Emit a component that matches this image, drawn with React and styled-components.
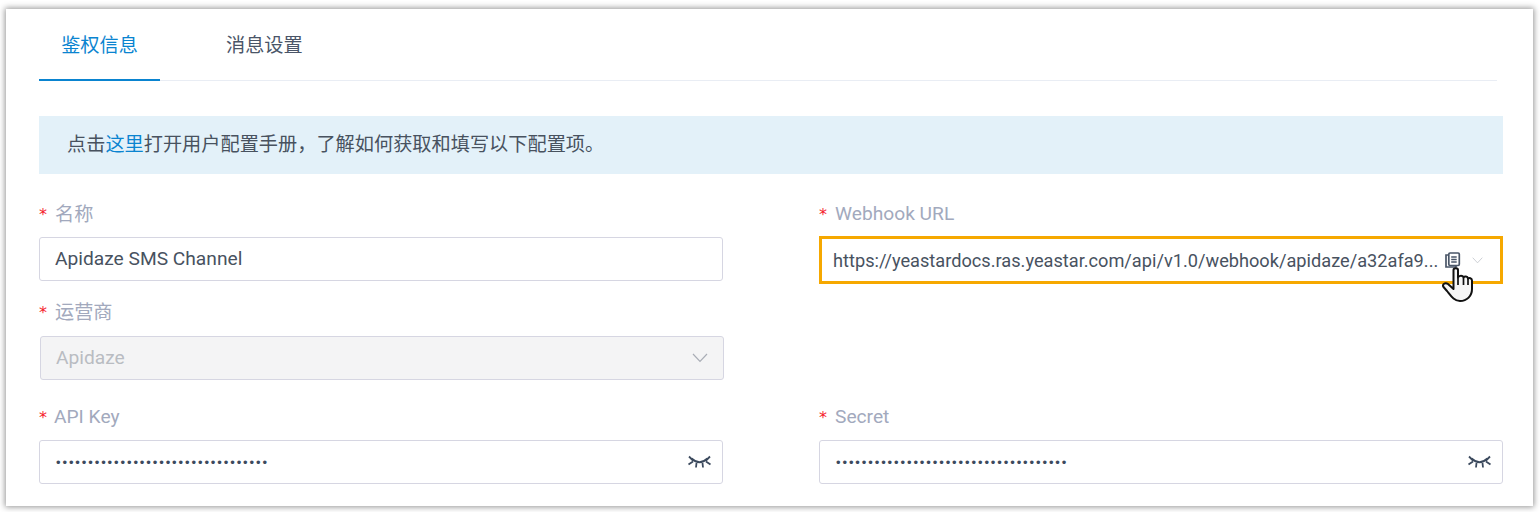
import React from "react";
import styled, { createGlobalStyle } from "styled-components";

const Global = createGlobalStyle`
  html, body { margin: 0; padding: 0; background: #fff; }
  body { font-family: Roboto, "Noto Sans CJK SC", sans-serif; width: 1540px; height: 512px; overflow: hidden; }
`;

const Panel = styled.main`
  box-sizing: border-box;
  margin: 9px 0 0 6px;
  width: 1527px;
  height: 497px;
  background: #fff;
  padding-left: 33px;
  box-shadow: 0 0 6px 1px rgba(0, 0, 0, 0.42);
  overflow: hidden;
`;

const Tabs = styled.nav`
  display: flex;
  width: 1458px;
  height: 72px;
  border-bottom: 1px solid #e9edf4;
  box-sizing: border-box;
`;

const Tab = styled.div`
  box-sizing: border-box;
  width: ${(p) => (p.$active ? "121px" : "auto")};
  margin-left: ${(p) => (p.$active ? "0" : "66px")};
  height: 72px;
  padding-top: 1px;
  line-height: 71px;
  text-align: center;
  font-size: 19.2px;
  color: ${(p) => (p.$active ? "#0a84d0" : "#4a5568")};
  border-bottom: ${(p) => (p.$active ? "2px solid #0a84d0" : "none")};
`;

const Alert = styled.div`
  box-sizing: border-box;
  width: 1464px;
  height: 58px;
  margin-top: 35px;
  padding-left: 28px;
  background: #e3f1f9;
  line-height: 58px;
  font-size: 19.2px;
  color: #48525f;
`;

const AlertLink = styled.span`
  color: #0a84d0;
`;

const Form = styled.form`
  display: grid;
  grid-template-columns: 684px 684px;
  column-gap: 96px;
  width: 1464px;
`;

const Field = styled.div`
  box-sizing: border-box;
  height: ${(p) => p.$h}px;
  padding-top: ${(p) => p.$pt}px;
`;

const Label = styled.label`
  display: flex;
  align-items: center;
  height: 24px;
  font-size: 19.2px;
  color: #a2a9bd;
  margin-left: ${(p) => p.$ml || 0}px;
`;

const Star = styled.span`
  color: #f5222d;
  width: ${(p) => p.$w || 16}px;
  font-size: 16px;
  font-family: "DejaVu Sans", sans-serif;
  line-height: 24px;
  padding-top: 3px;
  box-sizing: border-box;
`;

const Input = styled.div`
  box-sizing: border-box;
  display: flex;
  align-items: center;
  height: 44px;
  margin: ${(p) => p.$mt ?? 12}px ${(p) => -(p.$ml || 0)}px 0 ${(p) => p.$ml || 0}px;
  padding: 0 ${(p) => (p.$disabled ? 15 : 11)}px 0 15px;
  border: 1px solid #d6d6e2;
  border-radius: 3px;
  background: ${(p) => (p.$disabled ? "#f4f4f5" : "#fff")};
  font-size: 19.2px;
  color: ${(p) => (p.$disabled ? "#b9bcc2" : "#48525f")};
`;

const FocusInput = styled(Input)`
  border: 3px solid #f6a800;
  border-radius: 0;
  height: 48px;
  padding: 0 12px 0 11px;
  font-size: 18.2px;
  position: relative;
`;

const Grow = styled.span`
  flex: 1;
  white-space: nowrap;
  overflow: hidden;
  padding-bottom: ${(p) => (p.$raised ? 2 : 0)}px;
`;

const Dots = styled.span`
  flex: 1;
  font-size: 13px;
  letter-spacing: 1.9px;
  padding-left: 1px;
  color: #3c4a5e;
  font-family: "Liberation Sans", sans-serif;
  white-space: nowrap;
  overflow: hidden;
`;

const CopyGap = styled.span`
  width: 11px;
`;

const EndGap = styled.span`
  width: 5px;
`;

const Cursor = styled.svg`
  position: absolute;
  left: 620px;
  top: 28px;
`;

const Eye = () => (
  <svg width="23" height="14" viewBox="0 0 23 14" fill="none" stroke="#3c4a5e" strokeWidth="2.1">
    <path d="M3.500 3.500Q11.500 11 19.500 3.500" />
    <path d="M1 1.500L5.500 6M22 1.500L17.500 6M.5 9.500L5 6.500M22.500 9.500L18 6.500M8.500 8L8 12.500M14.500 8L15 12.500" strokeWidth="1.800" />
  </svg>
);

const Chevron = ({ size = 16, color = "#a9adb6" }) => (
  <svg width={size} height={size * 0.6} viewBox="0 0 16 9.6" fill="none" stroke={color} strokeWidth="1.2">
    <path d="M1 1l7 7.500L15 1" />
  </svg>
);

const Copy = () => (
  <svg width="16" height="16" viewBox="0 0 16 16" fill="none" stroke="#4a5668" strokeWidth="1.7">
    <path d="M3 3H1v12h10v-1.500" />
    <rect x="3.800" y="1" width="10.500" height="12.500" rx="1.200" />
    <path d="M6.200 5h5.500M6.200 7.500h5.500M6.200 10h5.500" strokeWidth="1.300" />
  </svg>
);

const Hand = () => (
  <Cursor width="31" height="35" viewBox="0 0 31 35">
    <path
      d="M11.500 3C11.500 .5 16 .5 16 3V10.500C17 8 21 8 21.500 10.500C22.500 9 25.500 9 26 11.500C27 10.500 30 11 30 13.500V22C30 29 25 34 18 34C12 34 9 29 5 24L1.500 20C0 17.500 3 15 6 17L11.500 22Z"
      fill="#f6f6f6"
      stroke="#111"
      strokeWidth="2"
      strokeLinejoin="round"
    />
    <path d="M21.500 11V18M26 12V18M16 10.500V18" fill="none" stroke="#111" strokeWidth="1.700" />
  </Cursor>
);

export default function App() {
  return (
    <>
      <Global />
      <Panel>
        <Tabs>
          <Tab $active>鉴权信息</Tab>
          <Tab>消息设置</Tab>
        </Tabs>
        <Alert>
          点击<AlertLink>这里</AlertLink>打开用户配置手册，了解如何获取和填写以下配置项。
        </Alert>
        <Form>
          <Field $h={107} $pt={27}>
            <Label><Star>*</Star>名称</Label>
            <Input><Grow $raised>Apidaze SMS Channel</Grow></Input>
          </Field>
          <Field $h={107} $pt={27}>
            <Label><Star>*</Star>Webhook URL</Label>
            <FocusInput $mt={11}>
              <Grow>https://yeastardocs.ras.yeastar.com/api/v1.0/webhook/apidaze/a32afa9...</Grow>
              <Copy />
              <CopyGap />
              <Chevron size={11} color="#c2c6cc" />
              <EndGap />
              <Hand />
            </FocusInput>
          </Field>
          <Field $h={99} $pt={18}>
            <Label><Star>*</Star>运营商</Label>
            <Input $disabled $ml={1} $mt={13}>
              <Grow $raised>Apidaze</Grow>
              <Chevron />
            </Input>
          </Field>
          <div />
          <Field $h={104} $pt={24}>
            <Label><Star $w={15}>*</Star>API Key</Label>
            <Input>
              <Dots>•••••••••••••••••••••••••••••••••</Dots>
              <Eye />
            </Input>
          </Field>
          <Field $h={104} $pt={24}>
            <Label><Star>*</Star>Secret</Label>
            <Input>
              <Dots>••••••••••••••••••••••••••••••••••••</Dots>
              <Eye />
            </Input>
          </Field>
        </Form>
      </Panel>
    </>
  );
}
